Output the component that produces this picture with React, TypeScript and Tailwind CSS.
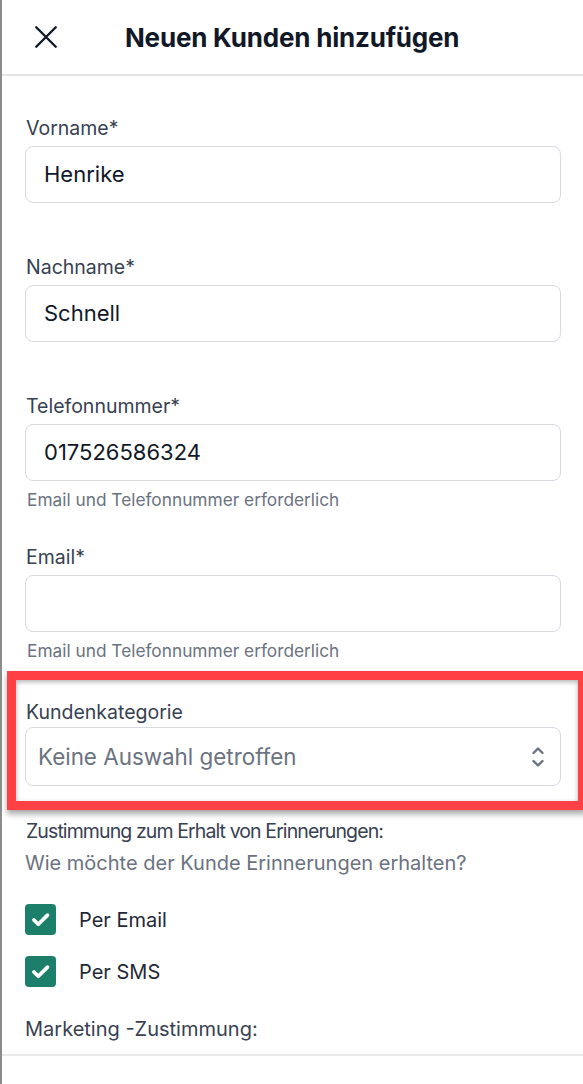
import React from "react";

const font = { fontFamily: "Inter, 'Noto Sans', sans-serif" };

function Field({ label, value, helper, className = "" }: { label: string; value?: string; helper?: boolean; className?: string }) {
  return (
    <div className={className}>
      <div className="text-[19.5px] leading-[24px] text-[#374151] pl-[1px]">{label}</div>
      <div className="mt-[6px] h-[57px] rounded-[8px] border border-[#d9dadf] flex items-center px-[18px] text-[22px] text-[#111827]">
        {value}
      </div>
      {helper && (
        <div className="mt-[9px] pl-[2px] text-[17.3px] leading-[20px] text-[#6b7280]">Email und Telefonnummer erforderlich</div>
      )}
    </div>
  );
}

function Check({ label }: { label: string }) {
  return (
    <div className="flex items-center h-[31px]">
      <div className="w-[31px] h-[31px] rounded-[4px] bg-[#1b7f6a] flex items-center justify-center">
        <svg width="21" height="21" viewBox="0 0 24 24" fill="none" stroke="white" strokeWidth="4.2" strokeLinecap="round" strokeLinejoin="round">
          <path d="M4.5 12.5l5 5L20 7" />
        </svg>
      </div>
      <span className="ml-[23px] text-[20px] text-[#1f2937]">{label}</span>
    </div>
  );
}

export default function App() {
  return (
    <div className="relative min-h-[1084px] bg-white border-l-2 border-[#8c8c8c] overflow-hidden" style={font}>
      <div className="h-[76px] border-b-2 border-[#e3e4e6] flex items-center">
        <div className="ml-[30px] w-[28px] h-[28px] flex items-center justify-center">
          <svg width="26" height="26" viewBox="0 0 24 24" fill="none" stroke="#111827" strokeWidth="2.2" strokeLinecap="round">
            <path d="M3 3l18 18M21 3L3 21" />
          </svg>
        </div>
        <div className="ml-[65px] text-[26px] font-bold text-[#111827] tracking-[-0.2px]">Neuen Kunden hinzufügen</div>
      </div>

      <div className="pl-[23px] pr-[22px]">
        <Field className="mt-[40px]" label="Vorname*" value="Henrike" />
        <Field className="mt-[52px]" label="Nachname*" value="Schnell" />
        <Field className="mt-[52px]" label="Telefonnummer*" value="017526586324" helper />
        <Field className="mt-[35px]" label="Email*" value="" helper />

        <div className="mt-[39px]">
          <div className="text-[19.5px] leading-[24px] text-[#374151] pl-[1px]">Kundenkategorie</div>
          <div className="mt-[3px] h-[59px] rounded-[8px] border border-[#d9dadf] flex items-center justify-between pl-[12px] pr-[15px]">
            <span className="text-[22.4px] text-[#6b7280]">Keine Auswahl getroffen</span>
            <svg width="14" height="22" viewBox="0 0 14 22" fill="none" stroke="#6b7280" strokeWidth="2.4" strokeLinecap="round" strokeLinejoin="round">
              <path d="M2.5 7L7 2.5L11.5 7" />
              <path d="M2.5 15L7 19.5L11.5 15" />
            </svg>
          </div>
        </div>

        <div className="mt-[33px] pl-[1px] text-[19.5px] leading-[24px] tracking-[-0.9px] text-[#374151]">Zustimmung zum Erhalt von Erinnerungen:</div>
        <div className="mt-[8px] text-[20px] leading-[24px] text-[#6b7280]">Wie möchte der Kunde Erinnerungen erhalten?</div>

        <div className="mt-[29px] flex flex-col gap-[21px]">
          <Check label="Per Email" />
          <Check label="Per SMS" />
        </div>

        <div className="mt-[30px] text-[20px] leading-[24px] text-[#374151]">Marketing -Zustimmung:</div>
      </div>
      <div className="mt-[13px] border-t-2 border-[#e8e9eb]" />

      <div className="absolute left-[5px] top-[671px] w-[580px] h-[139px] border-[9px] border-[#ff4044] shadow-[0_4px_6px_rgba(0,0,0,0.35),inset_0_2px_5px_rgba(0,0,0,0.3)]" />
    </div>
  );
}
